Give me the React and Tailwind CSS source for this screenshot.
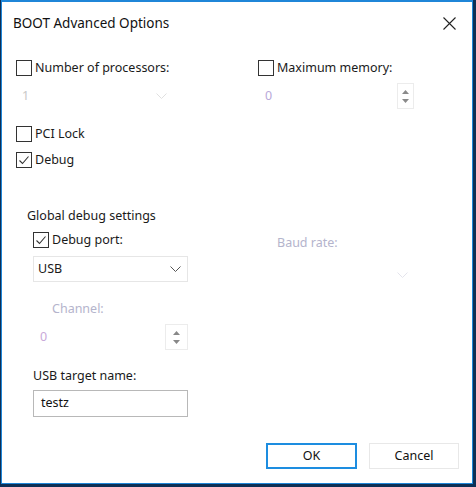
import React from "react";

const font = { fontFamily: '"Noto Sans", "Open Sans", sans-serif' };

function Box({ checked }) {
  return (
    <span className="w-4 h-4 border border-[#333] bg-white flex items-center justify-center shrink-0">
      {checked && (
        <svg width="12" height="12" viewBox="0 0 12 12">
          <path d="M1.5 6.5 L4.5 9.5 L10.5 2.5" fill="none" stroke="#333" strokeWidth="1.1" />
        </svg>
      )}
    </span>
  );
}

function Check({ checked, label }) {
  return (
    <div className="flex items-center gap-[3px] h-4">
      <Box checked={checked} />
      <span className="text-[12.5px] leading-4 text-[#1a1a1a]">{label}</span>
    </div>
  );
}

function Chevron({ color = "#555" }) {
  return (
    <svg width="11" height="6" viewBox="0 0 11 6">
      <path d="M0.5 0.5 L5.5 5.5 L10.5 0.5" fill="none" stroke={color} strokeWidth="1" />
    </svg>
  );
}

function Arrows({ color }) {
  return (
    <>
      <svg width="7" height="4" viewBox="0 0 7 4"><path d="M0 4 L3.5 0 L7 4 Z" fill={color} /></svg>
      <svg width="7" height="4" viewBox="0 0 7 4"><path d="M0 0 L3.5 4 L7 0 Z" fill={color} /></svg>
    </>
  );
}

export default function App() {
  return (
    <div className="w-[476px] h-[487px] bg-[#0d2f55] pl-[1px]" style={font}>
      <div className="w-[472px] h-[484px] border border-[#1f86d8] border-t-2 bg-white flex flex-col">
        {/* title bar */}
        <div className="h-[42px] flex items-center justify-between pl-[11px] pr-[16px]">
          <span className="text-[13.5px] text-[#111]">BOOT Advanced Options</span>
          <svg width="13" height="13" viewBox="0 0 13 13">
            <path d="M0.5 0.5 L12.5 12.5 M12.5 0.5 L0.5 12.5" stroke="#222" strokeWidth="1.1" />
          </svg>
        </div>

        <div className="pl-[14px] pt-[16px] flex flex-col">
          {/* row 1 */}
          <div className="flex">
            <div className="w-[242px]">
              <Check label="Number of processors:" />
            </div>
            <Check label="Maximum memory:" />
          </div>
          {/* row 2 */}
          <div className="flex mt-[7px] h-[26px]">
            <div className="w-[156px] flex items-center justify-between pl-[6px] pr-[5px]">
              <span className="text-[12.5px] text-[#c8c8c8]">1</span>
              <Chevron color="#e0e0e0" />
            </div>
            <div className="ml-[86px] w-[156px] flex items-center justify-between">
              <span className="pl-[7px] text-[12.5px] text-[#b9a9d9]">0</span>
              <div className="h-full w-[17px] border border-[#ececec] flex flex-col items-center justify-center gap-[5px]">
                <Arrows color="#8a8a8a" />
              </div>
            </div>
          </div>
          {/* checkboxes */}
          <div className="mt-[17px] flex flex-col gap-[10px]">
            <Check label="PCI Lock" />
            <Check checked label="Debug" />
          </div>

          {/* global debug settings */}
          <div className="pl-[11px] mt-[40px] flex flex-col">
            <span className="text-[12.5px] leading-4 text-[#1a1a1a]">Global debug settings</span>
            <div className="flex mt-[8px]">
              <div className="w-[250px] pl-[6px] flex flex-col">
                <Check checked label="Debug port:" />
                <div className="mt-[8px] w-[155px] h-[26px] border border-[#e6e6e6] flex items-center justify-between pl-[4px] pr-[6px]">
                  <span className="text-[12.5px] text-[#1a1a1a]">USB</span>
                  <Chevron color="#555" />
                </div>
                <span className="mt-[19px] pl-[19px] text-[12.5px] leading-4 text-[#b4b4cc]">Channel:</span>
                <div className="mt-[7px] w-[155px] h-[26px] flex items-center justify-between">
                  <span className="pl-[7px] text-[12.5px] text-[#c9a9d9]">0</span>
                  <div className="h-full border border-[#ececec] w-[23px] flex flex-col items-center justify-center gap-[5px]">
                    <Arrows color="#888" />
                  </div>
                </div>
                <span className="mt-[18px] text-[12.5px] leading-4 text-[#1a1a1a]">USB target name:</span>
                <div className="mt-[6px] w-[155px] h-[27px] border border-[#b8b8b8] flex items-center pl-[7px]">
                  <span className="text-[12.5px] text-[#111]">testz</span>
                </div>
              </div>
              <div className="flex flex-col pt-[3px]">
                <span className="text-[12.5px] leading-4 text-[#b4b4cc]">Baud rate:</span>
                <div className="mt-[21px] w-[131px] flex justify-end">
                  <Chevron color="#e4e4ec" />
                </div>
              </div>
            </div>
          </div>
        </div>

        <div className="mt-auto mb-[14px] flex justify-end gap-[12px] pr-[13px]">
          <div className="w-[91px] h-[26px] border-2 border-[#1d8de0] flex items-center justify-center text-[12.5px] text-[#111]">OK</div>
          <div className="w-[90px] h-[26px] border border-[#e8e8e8] flex items-center justify-center text-[12.5px] text-[#111]">Cancel</div>
        </div>
      </div>
    </div>
  );
}
